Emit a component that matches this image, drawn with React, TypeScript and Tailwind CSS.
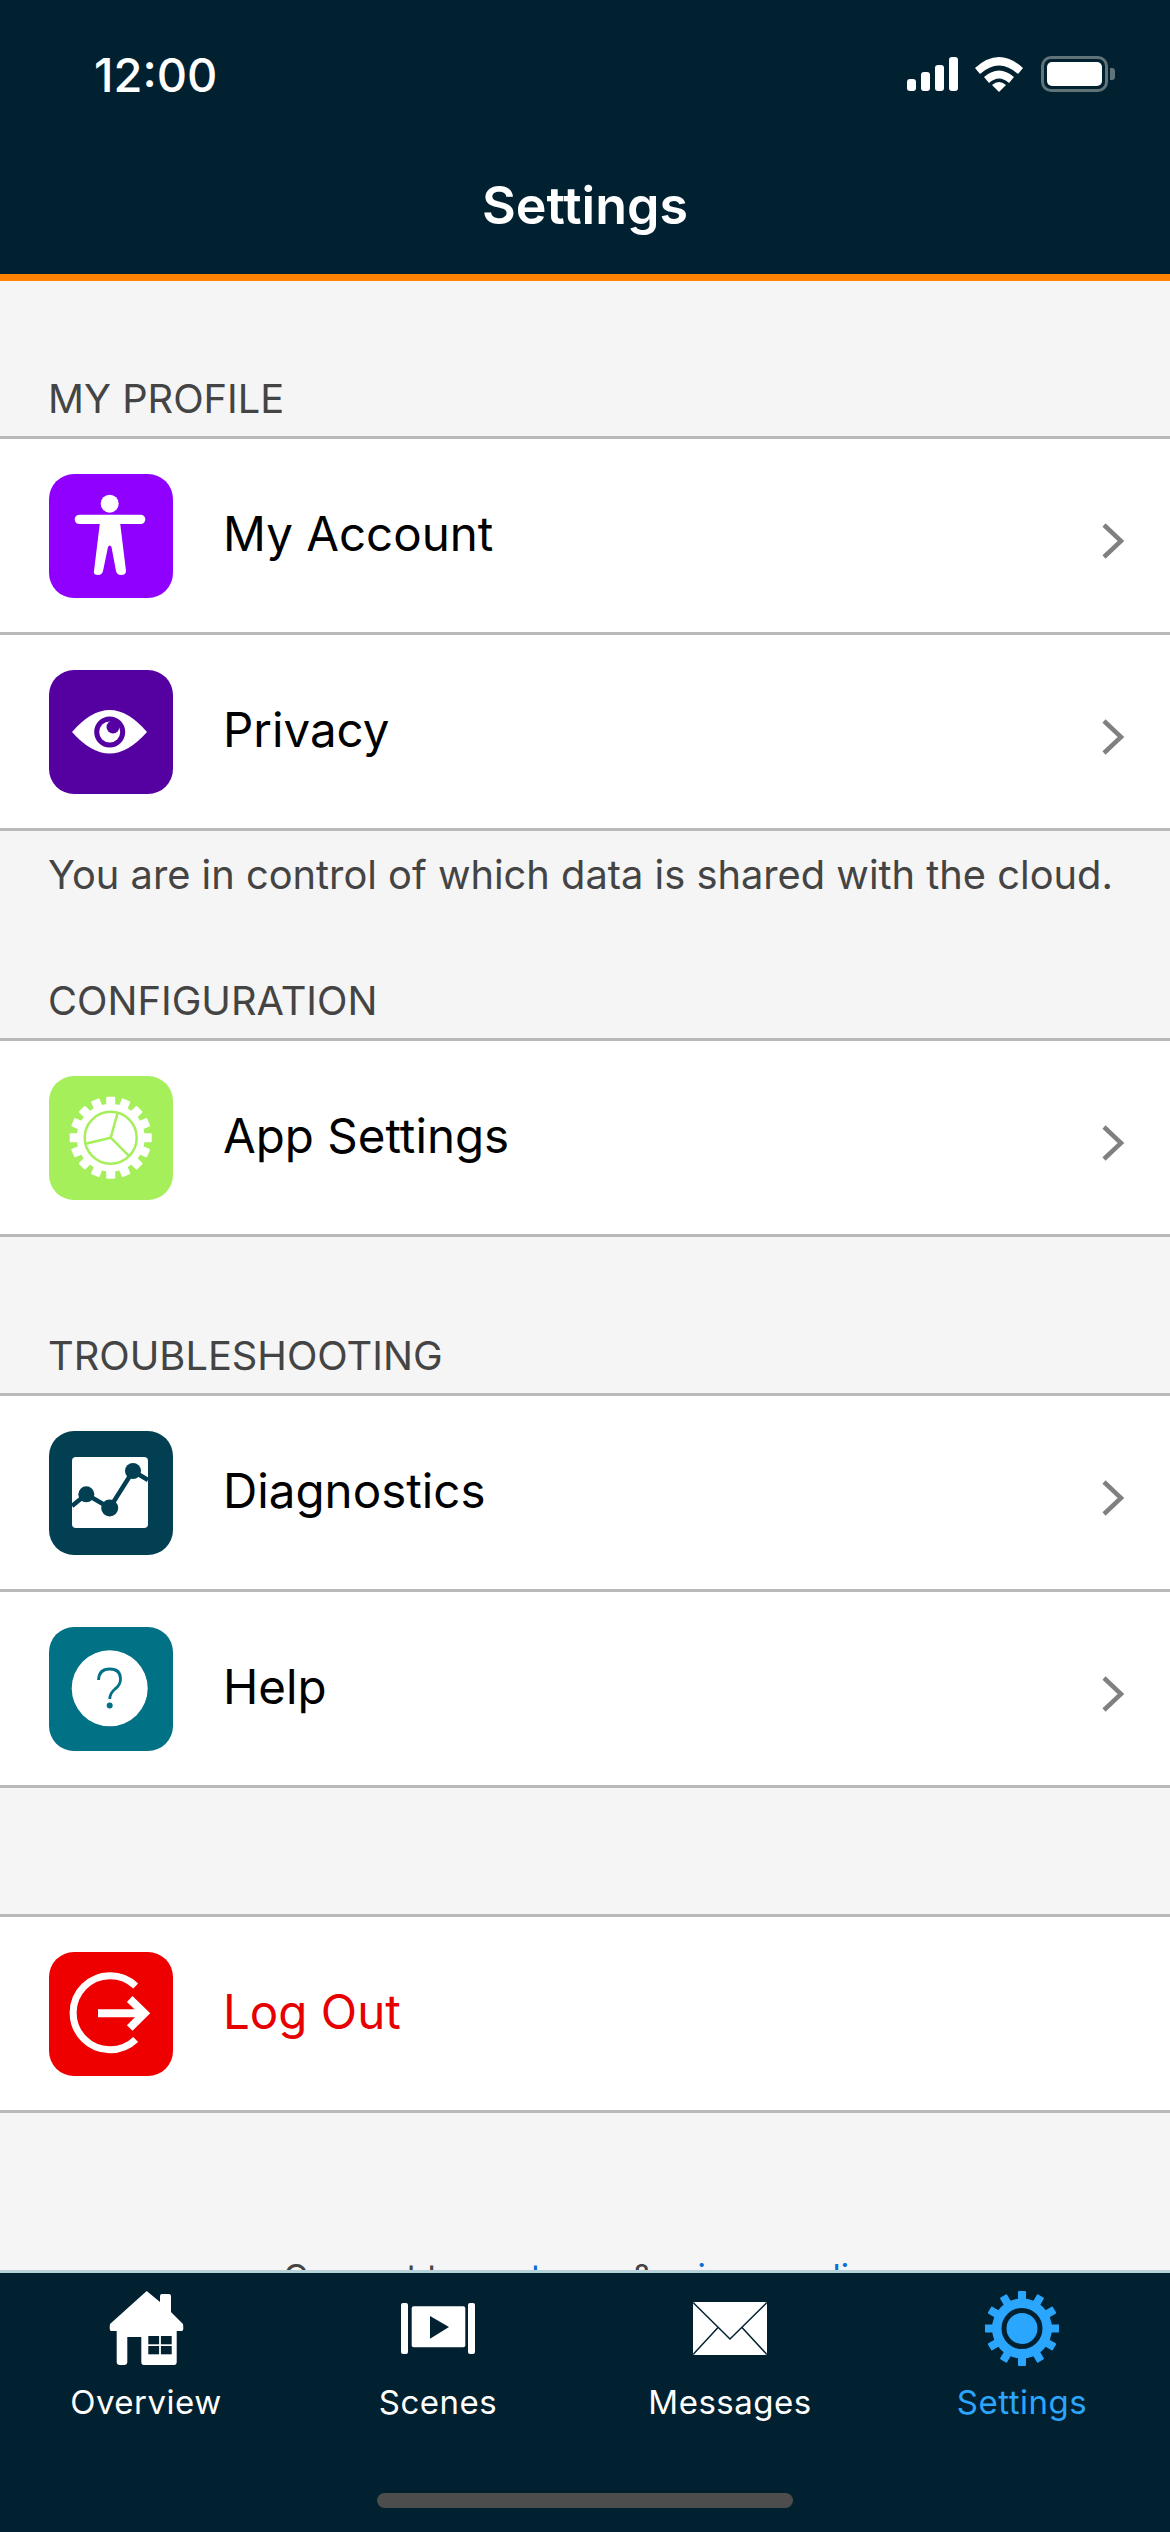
import React from "react";

const ink = "#012130";

function Teeth({ count, r, w, h, fill }: { count: number; r: number; w: number; h: number; fill: string }) {
  return (
    <>
      {Array.from({ length: count }).map((_, i) => (
        <rect key={i} x={-w / 2} y={-r} width={w} height={h} rx={1} fill={fill} transform={`rotate(${(360 / count) * i})`} />
      ))}
    </>
  );
}

function Tile({ bg, children }: { bg: string; children: React.ReactNode }) {
  return (
    <div className={`w-[124px] h-[124px] rounded-[25px] shrink-0 ${bg}`}>
      <svg viewBox="0 0 124 124" className="w-full h-full">
        {children}
      </svg>
    </div>
  );
}

function Row({ icon, label, red }: { icon: React.ReactNode; label: string; red?: boolean }) {
  return (
    <div className="h-[196px] bg-white flex items-center pl-[49px] pr-[45px] border-b-[3px] border-[#b9b9b9]">
      {icon}
      <span className={`ml-[50px] text-[47.5px] flex-1 leading-none pb-[3px] ${red ? "text-[#e60000]" : "text-black"}`}>{label}</span>
      {!red && (
        <svg viewBox="0 0 24 36" className="w-[24px] h-[36px] mt-[11px]">
          <path d="M3 2 L20 18 L3 34" fill="none" stroke="#808080" strokeWidth="4.5" />
        </svg>
      )}
    </div>
  );
}

function SectionTitle({ children, top }: { children: React.ReactNode; top: string }) {
  return (
    <div className={`${top} pl-[48px] text-[39.8px] leading-[46px] pb-[14px] text-[#444444] border-b-[3px] border-[#b9b9b9]`}>
      {children}
    </div>
  );
}

const person = (
  <Tile bg="bg-[#9000ff]">
    <circle cx="60.7" cy="29.7" r="9" fill="#fff" />
    <rect x="25.7" y="40.7" width="70.6" height="9.3" rx="4.6" fill="#fff" />
    <path d="M51 48 L71 48 L77 97 Q77 101 72 101 Q68 101 67 97 L62.5 73 Q60.7 70 59 73 L54 97 Q53 101 49 101 Q44 101 45 97 Z" fill="#fff" />
  </Tile>
);

const eye = (
  <Tile bg="bg-[#5500a0]">
    <path d="M23 62 Q42 40 60.7 40 Q79 40 98 62 Q79 83.500 60.700 83.500 Q42 83.500 23 62 Z" fill="#fff" />
    <circle cx="60.7" cy="62" r="15.500" fill="#5500a0" />
    <circle cx="60.7" cy="62" r="10.500" fill="#fff" />
    <circle cx="64" cy="57" r="6.500" fill="#5500a0" />
  </Tile>
);

const appGear = (
  <Tile bg="bg-[#a5ef5b]">
    <g transform="translate(61.700 61.700)">
      <Teeth count={16} r={41} w={9} h={12} fill="#fff" />
      <circle r="34" fill="#fff" />
      <circle r="26" fill="none" stroke="#a5ef5b" strokeWidth="2.500" />
      <path d="M0 0 L-25 6 M0 0 L7 -25 M0 0 L18.500 18.500" stroke="#a5ef5b" strokeWidth="2.500" />
    </g>
  </Tile>
);

const chart = (
  <Tile bg="bg-[#023f52]">
    <rect x="23" y="26" width="76" height="71" rx="4" fill="#fff" />
    <path d="M23 75 L37.300 63.300 L60.700 77 L84 40 L99 49" fill="none" stroke="#023f52" strokeWidth="4.500" />
    <circle cx="37.300" cy="63.300" r="8" fill="#023f52" />
    <circle cx="60.700" cy="77" r="8.500" fill="#023f52" />
    <circle cx="84" cy="40" r="8" fill="#023f52" />
  </Tile>
);

const help = (
  <Tile bg="bg-[#017186]">
    <circle cx="60.700" cy="61.300" r="38" fill="#fff" />
    <path d="M49.500 53 Q50 42 60.700 42 Q71.500 42 71.500 52 Q71.500 58 66 62 Q61 66 60.700 72" fill="none" stroke="#017186" strokeWidth="2.800" />
    <circle cx="60.700" cy="78.500" r="3" fill="#017186" />
  </Tile>
);

const logout = (
  <Tile bg="bg-[#ef0000]">
    <path d="M86.700 34 A37 37 0 1 0 86.700 87.500" fill="none" stroke="#fff" strokeWidth="7" />
    <path d="M49 61.300 L93 61.300" stroke="#fff" strokeWidth="8" />
    <path d="M80.700 47 L95.500 61.300 L80.700 76" fill="none" stroke="#fff" strokeWidth="8" />
  </Tile>
);

function TabItem({ label, active, children }: { label: string; active?: boolean; children: React.ReactNode }) {
  return (
    <div className="flex flex-col items-center w-[292px]">
      <div className="h-[75px] flex items-center justify-center">{children}</div>
      <span className={`mt-[17px] text-[33px] leading-[38px] tracking-[0.5px] ${active ? "text-[#2ba6ff]" : "text-white"}`}>{label}</span>
    </div>
  );
}

export default function App() {
  return (
    <div className="w-[1170px] h-[2532px] flex flex-col overflow-hidden bg-[#f5f5f5] font-['Inter','Liberation_Sans',sans-serif]">
      <header className="h-[281px] shrink-0 bg-[#012130] border-b-[7px] border-[#ff8200] text-white">
        <div className="flex items-center justify-between h-[36px] mt-[56px] pl-[94px] pr-[55px]">
          <span className="text-[47px] leading-none font-medium">12:00</span>
          <div className="flex items-center">
            <svg viewBox="0 0 51 34" className="w-[51px] h-[34px]">
              <rect x="0" y="22" width="9" height="12" rx="3" fill="#fff" />
              <rect x="14" y="15" width="9" height="19" rx="3" fill="#fff" />
              <rect x="28" y="8" width="9" height="26" rx="3" fill="#fff" />
              <rect x="42" y="0" width="9" height="34" rx="3" fill="#fff" />
            </svg>
            <svg viewBox="0 0 48 35" className="ml-[17px] w-[48px] h-[35px]">
              <path d="M0 11 Q24 -11 48 11 L43 17 Q24 0 5 17 Z" fill="#fff" />
              <path d="M9 20 Q24 7 39 20 L34 26 Q24 17 14 26 Z" fill="#fff" />
              <path d="M17 28 Q24 22 31 28 L24 35 Z" fill="#fff" />
            </svg>
            <div className="ml-[18px] w-[67px] h-[36px] rounded-[10px] border-[3px] border-[#5f7379] p-[3px]">
              <div className="w-full h-full rounded-[5px] bg-white" />
            </div>
            <div className="ml-[2px] w-[5px] h-[12px] rounded-r-[3px] bg-[#5f7379]" />
          </div>
        </div>
        <h1 className="mt-[84px] text-center text-[52px] leading-[60px] font-semibold">Settings</h1>
      </header>

      <main className="flex-1 min-h-0 overflow-hidden relative">
        <SectionTitle top="mt-[95px]">MY PROFILE</SectionTitle>
        <Row icon={person} label="My Account" />
        <Row icon={eye} label="Privacy" />
        <p className="pl-[48px] mt-[21px] text-[39.8px] leading-[46px] text-[#444444]">You are in control of which data is shared with the cloud.</p>

        <SectionTitle top="mt-[80px]">CONFIGURATION</SectionTitle>
        <Row icon={appGear} label="App Settings" />

        <SectionTitle top="mt-[96px]">TROUBLESHOOTING</SectionTitle>
        <Row icon={chart} label="Diagnostics" />
        <Row icon={help} label="Help" />

        <div className="mt-[126px] border-t-[3px] border-[#b9b9b9]">
          <Row icon={logout} label="Log Out" red />
        </div>

        <p className="mt-[143px] text-center text-[34px] leading-[42px] text-[#444444]">
          Consent to our <span className="text-[#0a6fd6]">terms</span> &amp; <span className="text-[#0a6fd6]">privacy policy</span>
        </p>
      </main>

      <footer className="h-[262px] shrink-0 bg-[#012130] border-t-[3px] border-[#b5d3d9] relative">
        <div className="flex pt-[18px]">
          <TabItem label="Overview">
            <svg viewBox="0 0 75 75" className="w-[75px] h-[75px]">
              <path d="M37.700 0 L51 11 L51 5 Q51 3 53 3 L60 3 Q62 3 62 5 L62 21 L74 33 Q75 40 73 40 L67.700 40 L67.700 71 Q67.700 74 65 74 L35 74 Q32.300 74 32.300 71 L32.300 46 L18.300 46 L18.300 71 Q18.300 74 15 74 L11 74 Q7.700 74 7.700 71 L7.700 40 L2 40 Q0 40 1 33 Z" fill="#fff" />
              <rect x="39.300" y="45" width="10.800" height="8.300" fill={ink} />
              <rect x="51.900" y="45" width="10.800" height="8.300" fill={ink} />
              <rect x="39.300" y="55" width="10.800" height="8.300" fill={ink} />
              <rect x="51.900" y="55" width="10.800" height="8.300" fill={ink} />
            </svg>
          </TabItem>
          <TabItem label="Scenes">
            <svg viewBox="0 0 74 51" className="w-[74px] h-[51px]">
              <rect x="0" y="0" width="7" height="51" rx="2" fill="#fff" />
              <rect x="67" y="0" width="7" height="51" rx="2" fill="#fff" />
              <rect x="10.700" y="3.300" width="53.600" height="41" rx="2" fill="#fff" />
              <path d="M29 13 L48 24 L29 35.700 Z" fill={ink} />
            </svg>
          </TabItem>
          <TabItem label="Messages">
            <svg viewBox="0 0 74 53" className="w-[74px] h-[53px]">
              <rect x="0" y="0" width="74" height="53" rx="2" fill="#fff" />
              <path d="M0.500 1 L37 37 L73.500 1 M0.500 52 L25 25.500 M73.500 52 L49 25.500" fill="none" stroke={ink} strokeWidth="1.500" />
            </svg>
          </TabItem>
          <TabItem label="Settings" active>
            <svg viewBox="0 0 74 75" className="w-[74px] h-[75px]">
              <g transform="translate(37 37.500)">
                <Teeth count={12} r={37.500} w={8} h={10} fill="#2ba6ff" />
                <circle r="30" fill="#2ba6ff" />
                <circle r="18" fill="none" stroke={ink} strokeWidth="5" />
              </g>
            </svg>
          </TabItem>
        </div>
        <div className="absolute bottom-[24px] left-[377px] w-[416px] h-[15px] rounded-full bg-[#4d4d4d]" />
      </footer>
    </div>
  );
}
